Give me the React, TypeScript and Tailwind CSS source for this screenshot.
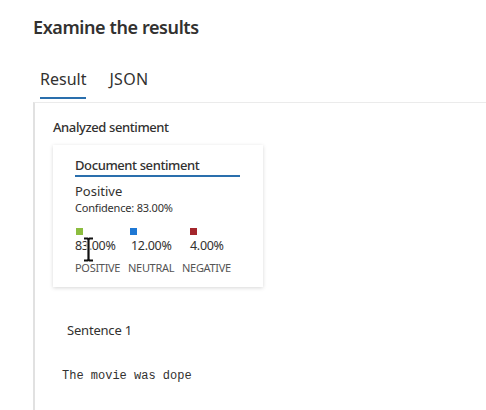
export default function App() {
  const font = { fontFamily: '"Noto Sans", "Open Sans", sans-serif' };
  return (
    <div className="w-[486px] h-[410px] bg-white overflow-hidden text-[#323130]" style={font}>
      <div className="pl-[33px] pt-[13px]">
        <h1 className="text-[18px] leading-[28px] font-semibold tracking-[-0.4px]">Examine the results</h1>
        <div className="flex mt-[27px] pl-[7px] gap-[23px] text-[16px] leading-[22px]">
          <div className="flex flex-col">
            <span>Result</span>
            <div className="h-[2px] bg-[#2a6fad] mt-[7px]" />
          </div>
          <span className="tracking-[0.3px]">JSON</span>
        </div>
        <div className="mt-[3px] border-l-2 border-t border-l-[#e1e1e1] border-t-[#ebebeb] h-[320px] pl-[18px] pt-[15px]">
          <div className="text-[13px] leading-[18px] font-medium tracking-[-0.4px]">Analyzed sentiment</div>
          <div className="mt-[9px] w-[210px] h-[142px] bg-white shadow-[0_1px_4px_rgba(0,0,0,0.16)] pl-[22px] pt-[11px]">
            <div className="w-[165px] border-b-2 border-[#2a6fad] text-[13px] leading-[18px] font-medium pb-[1px] tracking-[-0.4px]">Document sentiment</div>
            <div className="mt-[6px] text-[13px] leading-[16px]">Positive</div>
            <div className="text-[11px] leading-[14px] mt-[2px] tracking-[-0.2px]">Confidence: 83.00%</div>
            <div className="flex mt-[13px] text-[12.5px] leading-[16px]">
              <div className="flex flex-col w-[53px] relative">
                <div className="w-[7px] h-[7px] bg-[#8cbd3f] ml-[1px]" />
                <span className="mt-[3px] tracking-[-0.3px]">83.00%</span>
                <span className="text-[11px] mt-[6px] text-[#555] tracking-[-0.3px]">POSITIVE</span>
                <svg className="absolute left-[7px] top-[9px]" width="13" height="25" viewBox="0 0 13 25">
                  <path d="M2 1.5h3.5l1 1 1-1H11M6.5 2.5v20M2 23.5h3.5l1-1 1 1H11" fill="none" stroke="#fff" strokeWidth="4" />
                  <path d="M2 1.5h3.5l1 1 1-1H11M6.5 2.5v20M2 23.5h3.5l1-1 1 1H11" fill="none" stroke="#111" strokeWidth="2.2" />
                </svg>
              </div>
              <div className="flex flex-col w-[54px]">
                <div className="w-[7px] h-[7px] bg-[#1e78d4] ml-[2px]" />
                <span className="mt-[3px] ml-[3px] tracking-[-0.3px]">12.00%</span>
                <span className="text-[11px] mt-[6px] text-[#555] tracking-[-0.3px]">NEUTRAL</span>
              </div>
              <div className="flex flex-col">
                <div className="w-[7px] h-[7px] bg-[#a4262c] ml-[8px]" />
                <span className="mt-[3px] ml-[8px] tracking-[-0.3px]">4.00%</span>
                <span className="text-[11px] mt-[6px] text-[#555] tracking-[-0.3px]">NEGATIVE</span>
              </div>
            </div>
          </div>
          <div className="mt-[34px] pl-[14px] text-[13px] leading-[18px] tracking-[-0.2px]">Sentence 1</div>
          <div className="mt-[29px] pl-[9px] text-[12px] leading-[16px]" style={{ fontFamily: '"Liberation Mono", "DejaVu Sans Mono", monospace' }}>The movie was dope</div>
        </div>
      </div>
    </div>
  );
}
